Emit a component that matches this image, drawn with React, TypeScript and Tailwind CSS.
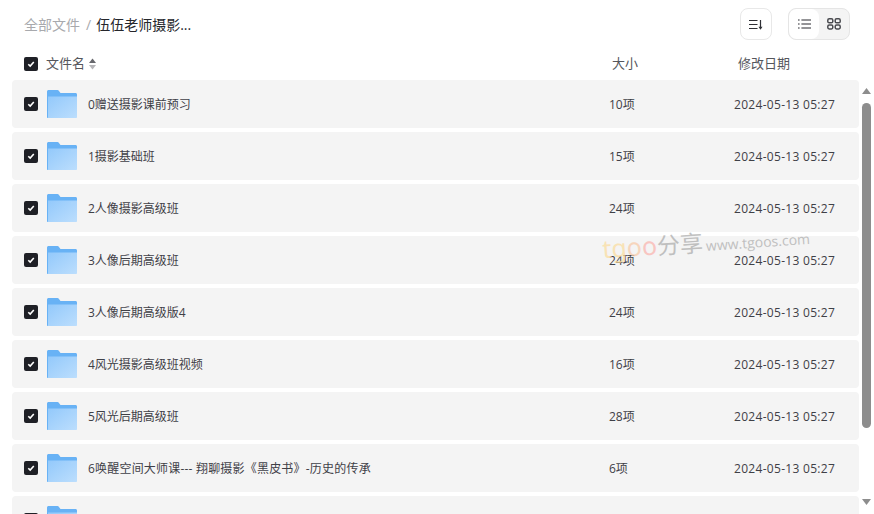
const rows = [
  { name: "0赠送摄影课前预习", count: "10项" },
  { name: "1摄影基础班", count: "15项" },
  { name: "2人像摄影高级班", count: "24项" },
  { name: "3人像后期高级班", count: "24项" },
  { name: "3人像后期高级版4", count: "24项" },
  { name: "4风光摄影高级班视频", count: "16项" },
  { name: "5风光后期高级班", count: "28项" },
  { name: "6唤醒空间大师课--- 翔聊摄影《黑皮书》-历史的传承", count: "6项", wide: true },
  { name: "", count: "" },
];

const Check = () => (
  <span className="flex h-[14px] w-[14px] shrink-0 items-center justify-center rounded-[2px] bg-[#1f2026]">
    <svg width="10" height="10" viewBox="0 0 10 10" fill="none">
      <path d="M2.3 5.2 4.2 7.1 7.8 3" stroke="#fff" strokeWidth="1.6" />
    </svg>
  </span>
);

const Folder = () => (
  <svg width="30" height="28" viewBox="0 0 30 28" className="shrink-0">
    <defs>
      <linearGradient id="front" x1="0" y1="0" x2="1" y2="1">
        <stop offset="0" stopColor="#93c9fb" />
        <stop offset="1" stopColor="#bcdefd" />
      </linearGradient>
    </defs>
    <path d="M0 1.5C0 .7 .7 0 1.5 0h9c.6 0 1 .3 1.3 .8L13.5 3H28.5c.9 0 1.5 .7 1.5 1.5V10H0z" fill="#68b2f5" />
    <path d="M0 6h1.5v22H1c-.6 0-1-.4-1-1z" fill="#68b2f5" />
    <path d="M1 6.5h29V27c0 .6-.4 1-1 1H1z" fill="url(#front)" />
    <rect x="24" y="8" width="4" height="2" fill="#a9d4fb" />
  </svg>
);

export default function App() {
  return (
    <div
      className="relative flex h-[514px] w-[874px] flex-col overflow-hidden bg-white text-[#3f4047]"
      style={{ fontFamily: '"Open Sans", "Noto Sans CJK SC", sans-serif' }}
    >
      <div className="flex h-[48px] shrink-0 items-center justify-between pl-6 pr-6">
        <div className="flex items-center text-[14px]">
          <span className="text-[#a8a9ad]">全部文件</span>
          <span className="ml-[6px] mr-[5px] text-[#a8a9ad]">/</span>
          <span className="text-[#25262b]">伍伍老师摄影...</span>
        </div>
        <div className="flex items-center gap-4">
          <button className="flex h-8 w-8 items-center justify-center rounded-lg border border-[#e8e8e8]">
            <svg width="14" height="11" viewBox="0 0 14 11" fill="none" stroke="#2f3035" strokeWidth="1.2">
              <path d="M0 1.5h8.5M0 5.5h8.5M0 9.5h8.5M11.5 1v8" />
              <path d="M9.5 7.8l2 3 2-3z" fill="#2f3035" stroke="none" />
            </svg>
          </button>
          <div className="flex h-8 w-[62px] overflow-hidden rounded-lg border border-[#e5e5e5] bg-[#f4f4f4]">
            <div className="flex w-[30px] items-center justify-center rounded-lg bg-white">
              <svg width="13" height="10" viewBox="0 0 13 10" fill="none" stroke="#2a2b30" strokeWidth="1.1">
                <path d="M0 1h1.6M3.4 1H13M0 5h1.6M3.4 5H13M0 9h1.6M3.4 9H13" />
              </svg>
            </div>
            <div className="flex flex-1 items-center justify-center">
              <svg width="14" height="12" viewBox="0 0 14 12" fill="none" stroke="#4a4b50" strokeWidth="1.5">
                <rect x=".8" y=".8" width="5" height="4" rx="1.4" />
                <rect x="8.2" y=".8" width="5" height="4" rx="1.4" />
                <rect x=".8" y="7" width="5" height="4" rx="1.4" />
                <rect x="8.2" y="7" width="5" height="4" rx="1.4" />
              </svg>
            </div>
          </div>
        </div>
      </div>

      <div className="flex h-[32px] shrink-0 items-center pl-6 text-[13px] text-[#55565c]">
        <Check />
        <span className="ml-[8px]">文件名</span>
        <svg width="7" height="12" viewBox="0 0 7 12" className="ml-[4px]">
          <path d="M3.5 0.5 7 5H0z" fill="#66676c" />
          <path d="M3.5 11.5 0 7h7z" fill="#b5b5b8" />
        </svg>
        <span className="ml-[516px] w-[126px]">大小</span>
        <span>修改日期</span>
      </div>

      <div className="flex min-h-0 flex-1">
        <div className="flex w-[859px] shrink-0 flex-col gap-1 pl-3">
          {rows.map((row, i) => (
            <div key={i} className="flex h-[48px] shrink-0 items-center rounded bg-[#f4f4f4] pl-3 text-[12px] text-[#3f4047]">
              <Check />
              <span className="ml-[9px]"><Folder /></span>
              <span className={row.wide ? "ml-[11px] w-[521px] pt-[2px] tracking-[0.2px]" : "ml-[11px] w-[521px] pt-[2px]"}>{row.name}</span>
              <span className="w-[125px] pt-[2px]">{row.count}</span>
              {row.name && <span className="pt-[2px] tracking-[0.3px]">2024-05-13 05:27</span>}
            </div>
          ))}
        </div>
        <div className="flex flex-1 flex-col items-center pl-[3px] pr-[5px] pt-[8px]">
          <svg width="9" height="6" viewBox="0 0 9 6"><path d="M4.5 0 9 6H0z" fill="#8d8d8d" /></svg>
          <div className="mt-[9px] h-[325px] w-[9px] rounded-full bg-[#8d8d8d]" />
          <div className="flex-1" />
          <svg width="9" height="6" viewBox="0 0 9 6" className="mb-[9px]"><path d="M4.5 6 0 0h9z" fill="#8d8d8d" /></svg>
        </div>
      </div>

      <div className="absolute left-[602px] top-[229px] flex rotate-[-4deg] items-baseline opacity-70">
        <span className="text-[25px] leading-none" style={{ fontFamily: '"Noto Sans", sans-serif' }}>
          <span className="text-[#fbdc9c]">t</span>
          <span className="text-[#fbdc9c]">g</span>
          <span className="text-[#f9c9a6]">o</span>
          <span className="text-[#fbb2ac]">o</span>
        </span>
        <span className="text-[23px] leading-none text-[#a9a9a9]">分享</span>
        <span className="ml-[3px] text-[14px] leading-none text-[#a9a9a9]">www.tgoos.com</span>
      </div>
    </div>
  );
}
